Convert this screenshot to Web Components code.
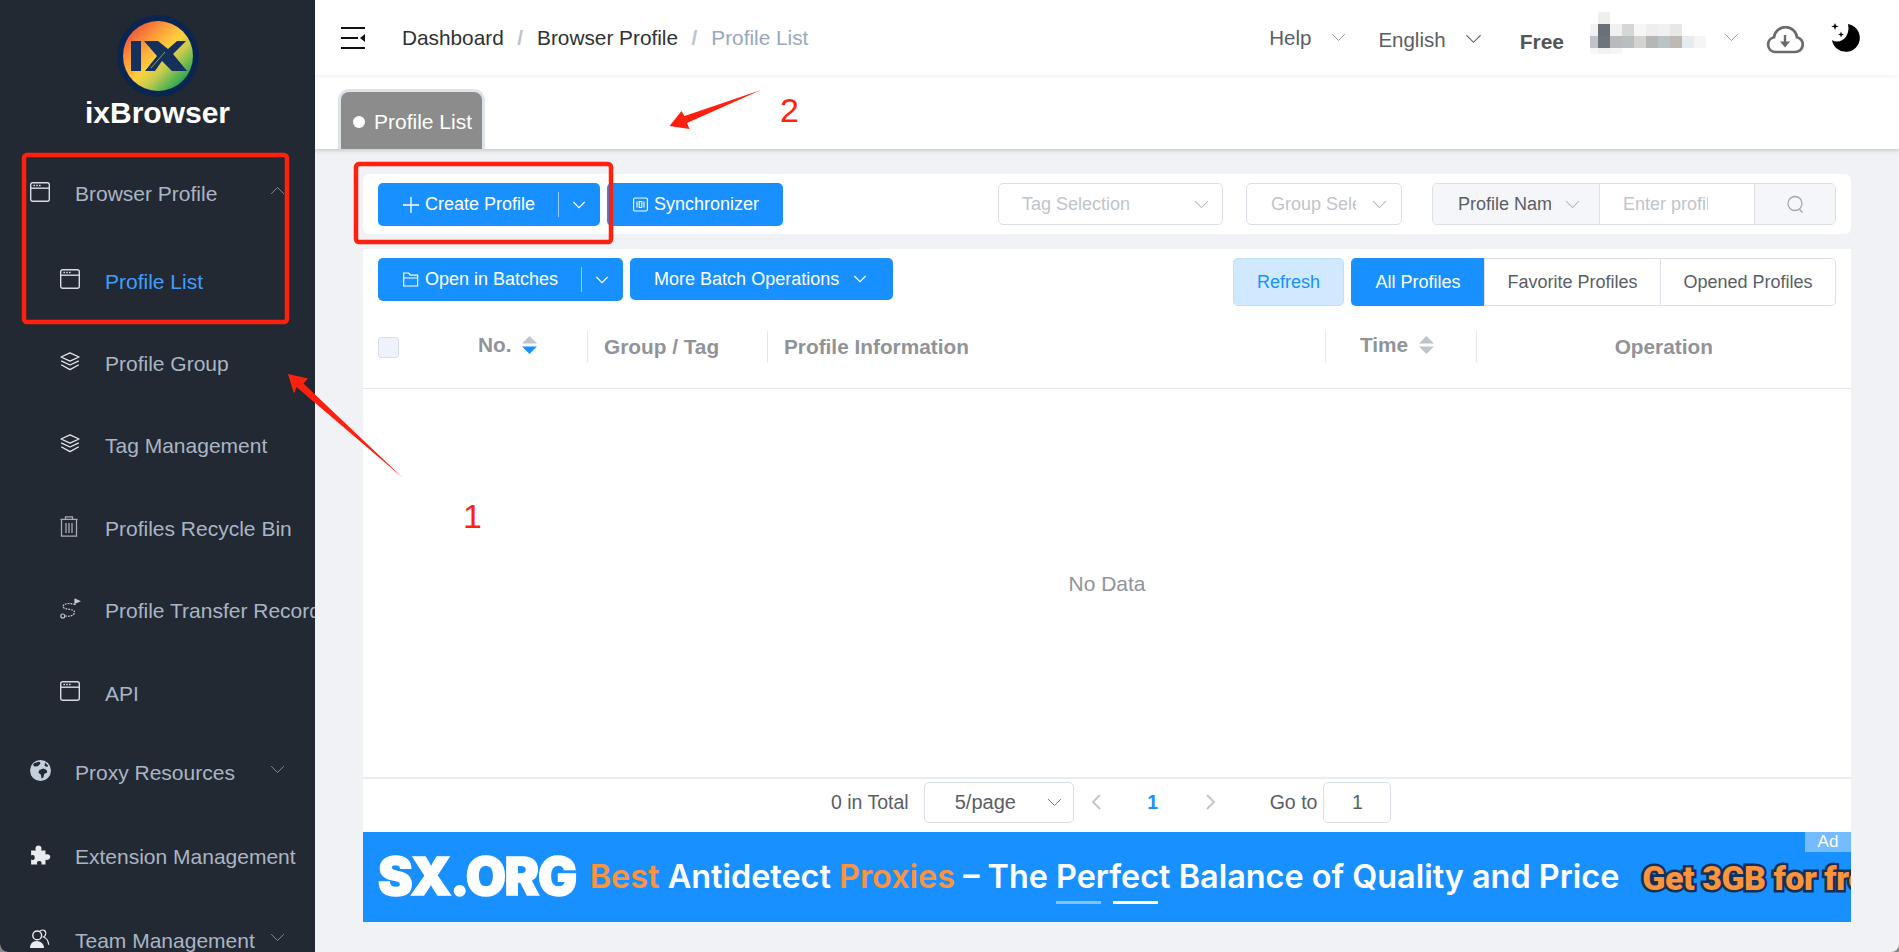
<!DOCTYPE html>
<html>
<head>
<meta charset="utf-8">
<title>Profile List</title>
<style>
  html, body { margin: 0; height: 100%; background: #8a8a8a; overflow: hidden; }
  body { font-family: "Liberation Sans", Arial, sans-serif; }
</style>
</head>
<body>
<app-shell></app-shell>

<script>
const CHEVRON = (size, color, width) => `<svg width="${size}" height="${Math.round(size * 0.6)}" viewBox="0 0 20 12" fill="none" stroke="${color}" stroke-width="${width || 1.4}"><path d="M1.5 1.5 10 10l8.5-8.5"/></svg>`;

const ICONS = {
  window: `<svg width="20" height="20" viewBox="0 0 20 20" fill="none" stroke="#d8dce2" stroke-width="1.4"><rect x=".7" y=".7" width="18.6" height="18.6" rx="2"/><path d="M1 6.2h18"/><path d="M3.4 3.5h1.6M6.2 3.5h1.6M9 3.5h1.6" stroke-width="1.3"/></svg>`,
  layers: `<svg width="20" height="19" viewBox="0 0 20 19" fill="none" stroke="#e6e9ec" stroke-width="1.3" stroke-linejoin="round"><path d="M10 .8 19 5 10 9.200 1 5z"/><path d="M1.200 8.800 10 13l8.800-4.200"/><path d="M1.200 12.800 10 17.600l8.800-4.800"/></svg>`,
  trash: `<svg width="18" height="21" viewBox="0 0 18 21" fill="none" stroke="#a8acb2" stroke-width="1.3"><path d="M.4 3.400h17.200M5.500 3.200V.8h7v2.400M1.500 3.400v16.800h15V3.400"/><path d="M6 7v10M9 7v10M12 7v10"/></svg>`,
  route: `<svg width="21" height="21" viewBox="0 0 21 21" fill="none" stroke="#c6cad0" stroke-width="1.200" stroke-dasharray="1.800 1"><path d="M15 6.600C10 4.600 3.500 5.400 3 8.600c-.5 3.200 11.500 1.800 11.500 5.600 0 3.600-5.500 4.600-9 3.800"/><circle cx="2.800" cy="18" r="2" stroke-dasharray="none"/><path d="M15 7V.8" stroke-dasharray="none"/><path d="M15 .6 21 3.200 15 5.800z" fill="#c6cad0" stroke="none"/></svg>`,
  globe: `<svg width="21" height="21" viewBox="0 0 21 21"><circle cx="10.5" cy="10.5" r="10.5" fill="#c3cfdd"/><path d="M4 3.2 8.6 1.8c2 .4 2.4 1.6 1 2.6L7.8 6.2 4.6 6.6 3 5.2zM9.4 10l4-1.4 3.2 1.4.6 2.6-3 1.4-.8 3.6-1.8 1-.8-4-2.4-1.8zM15 2.4l3 3-.6 1.6-2.8-1z" fill="#222933"/></svg>`,
  puzzle: `<svg width="21" height="20" viewBox="0 0 21 20"><path d="M.6 5.4h4.8C4.4 3.6 5 .6 8 .6s3.6 3 2.6 4.8H15v4.2c1.8-1 4.8-.4 4.8 2.1S16.800 15.700 15 14.700V19.400H10.800c.8-2 .2-3.400-2-3.400s-2.800 1.400-2 3.400H.6v-4.800c1.800.8 3.600.2 3.600-2.200S2.400 9.600.6 10.400z" fill="#e9ebee" transform="translate(.5 0)"/></svg>`,
  users: `<svg width="20" height="20" viewBox="0 0 20 20"><path d="M0 19c0-4 2.400-7 6.600-7s7.400 3 7.400 7z" fill="#e9ebee"/><circle cx="7.200" cy="6.400" r="4.400" fill="none" stroke="#e9ebee" stroke-width="1.400"/><path d="M10 2c3-2.200 6-.4 5.800 2.600-.1 1.600-1 2.800-2.300 3.400 2.800 1 4.800 3.800 5.200 7.800" fill="none" stroke="#e9ebee" stroke-width="1.200"/></svg>`,
  plus: `<svg width="16" height="16" viewBox="0 0 16 16" stroke="#fff" stroke-width="1.3"><path d="M8 0v16M0 8h16"/></svg>`,
  sync: `<svg width="15" height="15" viewBox="0 0 15 15" fill="none" stroke="#fff" stroke-width="1.1"><rect x=".6" y="1" width="13.800" height="13" rx="1.500"/><path d="M4 4.500v6M11 4.500v6M6.200 4.500v6h2.600v-6z"/></svg>`,
  folder: `<svg width="16" height="15" viewBox="0 0 16 15" fill="none" stroke="#fff" stroke-width="1.200"><path d="M.7 14V1h5l1.500 2.200h7.400V14zM.7 6h14.600"/></svg>`
};

class SideItem extends HTMLElement {
  constructor() {
    super();
    this.attachShadow({ mode: 'open' });
  }
  connectedCallback() {
    let arrow = this.getAttribute("arrow");
    let sub = this.hasAttribute("sub");
    let chevron = "";
    if (arrow == "up") chevron = `<span class="arrow up">${CHEVRON(15, "#7f8894", 1.3)}</span>`;
    if (arrow == "down") chevron = `<span class="arrow">${CHEVRON(15, "#7f8894", 1.3)}</span>`;
    this.shadowRoot.innerHTML = `
      <style>
        :host {
          display: flex;
          align-items: center;
          height: ${sub ? "82.4px" : "84px"};
          padding-left: ${sub ? "60px" : "30px"};
          padding-top: 2px;
          box-sizing: border-box;
          font-size: 21px;
          color: ${this.hasAttribute("active") ? "#409eff" : "#aab5c4"};
          white-space: nowrap;
          position: relative;
        }
        .icon {
          width: 45px;
          display: flex;
          flex: none;
          margin-top: -5px;
        }
        .arrow {
          position: absolute;
          left: 270px;
          top: 50%;
          margin-top: -7px;
          display: flex;
        }
        .up { transform: rotate(180deg); }
      </style>
      <span class="icon">${ICONS[this.getAttribute("icon")]}</span>
      <slot></slot>
      ${chevron}
    `;
  }
}
customElements.define("side-item", SideItem);

class AppSidebar extends HTMLElement {
  constructor() {
    super();
    this.attachShadow({ mode: 'open' }).innerHTML = `
      <style>
        :host {
          display: block;
          flex: none;
          width: 315px;
          background: #222933;
          overflow: hidden;
        }
        .brand {
          height: 151px;
          box-sizing: border-box;
          padding-top: 15px;
          display: flex;
          flex-direction: column;
          align-items: center;
          color: #fff;
          font-weight: 700;
          font-size: 30px;
          line-height: 34px;
        }
        .brand svg { display: block; }
        .brand span { margin-top: -1.5px; }
        .subs { margin-top: 4.5px; margin-bottom: -3.5px; }
      </style>
      <div class="brand">
        <svg width="82" height="82" viewBox="0 0 82 82">
          <defs>
            <linearGradient id="lg" x1="0.12" y1="0.08" x2="0.9" y2="0.88">
              <stop offset="0" stop-color="#ee4f3c"/>
              <stop offset="0.3" stop-color="#fd9f3a"/>
              <stop offset="0.52" stop-color="#fdd13d"/>
              <stop offset="0.68" stop-color="#c5cc4e"/>
              <stop offset="1" stop-color="#0fa254"/>
            </linearGradient>
          </defs>
          <circle cx="41" cy="41" r="41" fill="#0a2650"/>
          <circle cx="41" cy="41" r="35" fill="url(#lg)"/>
          <rect x="14" y="26" width="10" height="30" fill="#15305a"/>
          <path d="M27 26H41L51 34 60 26H69L56 39 70 56H55L45 46 38 56H28L40 41z" fill="#15305a"/>
          <path d="M48 37 34 53" stroke="#c9c94a" stroke-width=".7"/>
        </svg>
        <span>ixBrowser</span>
      </div>
      <side-item icon="window" arrow="up">Browser Profile</side-item>
      <div class="subs">
        <side-item sub icon="window" active>Profile List</side-item>
        <side-item sub icon="layers">Profile Group</side-item>
        <side-item sub icon="layers">Tag Management</side-item>
        <side-item sub icon="trash">Profiles Recycle Bin</side-item>
        <side-item sub icon="route">Profile Transfer Record</side-item>
        <side-item sub icon="window">API</side-item>
      </div>
      <side-item icon="globe" arrow="down">Proxy Resources</side-item>
      <side-item icon="puzzle">Extension Management</side-item>
      <side-item icon="users" arrow="down">Team Management</side-item>
    `;
  }
}
customElements.define("app-sidebar", AppSidebar);

class BlurName extends HTMLElement {
  constructor() {
    super();
    let rows = [
      ["", "#eef0ee"],
      ["#f1f1f1", "#6b7078", "#f0f0f0", "#d5d7d6", "#f6f6f6", "#eeeeee", "#eff0ef", "#e7e7e7"],
      ["#c0c3c8", "#6f737b", "#b8babd", "#b9bfc0", "#d3d3d0", "#b6b6b6", "#b9c2c5", "#bdbab6", "#e6ebef", "#f4f5f5"],
      ["#f8f8f8", "#f0f1f0", "#f6f6f6"]
    ];
    let cells = "";
    rows.forEach(row => {
      for (let i = 0; i < 10; i++) {
        cells += `<i style="background:${row[i] || "#fff"}"></i>`;
      }
    });
    this.attachShadow({ mode: 'open' }).innerHTML = `
      <style>
        :host {
          display: grid;
          grid-template-columns: 8px repeat(9, 12px);
          grid-template-rows: 12px 12px 12px 6px;
          flex: none;
          align-self: flex-start;
          margin-top: 12px;
        }
      </style>
      ${cells}
    `;
  }
}
customElements.define("blur-name", BlurName);

class TopBar extends HTMLElement {
  constructor() {
    super();
    this.attachShadow({ mode: 'open' }).innerHTML = `
      <style>
        :host {
          display: flex;
          align-items: center;
          height: 75px;
          background: #fff;
          box-shadow: 0 1px 4px rgba(0, 21, 41, .08);
          font-size: 20.8px;
          color: #303133;
          position: relative;
          z-index: 2;
          padding-left: 26px;
          padding-right: 38px;
          white-space: nowrap;
        }
        .crumbs {
          display: flex;
          align-items: center;
          margin-left: 37px;
        }
        .crumbs b { font-weight: 700; color: #c0c4cc; margin: 0 14px 0 13.5px; }
        .crumbs .last { color: #97a8be; }
        .right {
          margin-left: auto;
          display: flex;
          align-items: center;
          color: #5a5e66;
          height: 100%;
          font-size: 20.5px;
        }
        .help { margin-right: 20px; }
        .lang { margin: 4px 0 0 32px; }
        .free { margin: 8px 26px 0 38px; font-weight: 700; color: #555; font-size: 21px; }
        .c1 { display: flex; }
        .c2 { display: flex; margin: 2px 0 0 19px; }
        .c3 { display: flex; margin: 0 27px 0 18px; }
        .cloud { display: flex; margin-top: 4px; }
        .moon { margin-left: 27px; margin-top: 1px; display: flex; }
      </style>
      <svg width="24" height="22" viewBox="0 0 24 22" fill="#111"><path d="M0 0h24v2H0zM0 10h17v2H0zM0 20h24v2H0zM24 7v8l-5-4z"/></svg>
      <div class="crumbs">
        <span>Dashboard</span><b>/</b><span>Browser Profile</span><b>/</b><span class="last">Profile List</span>
      </div>
      <div class="right">
        <span class="help">Help</span>
        <span class="c1">${CHEVRON(15, "#8d929a", 1.2)}</span>
        <span class="lang">English</span>
        <span class="c2">${CHEVRON(17, "#60646c", 1.3)}</span>
        <span class="free">Free</span>
        <blur-name></blur-name>
        <span class="c3">${CHEVRON(15, "#8d929a", 1.2)}</span>
        <span class="cloud"><svg width="38" height="28" viewBox="0 0 38 28" fill="none" stroke="#6b6b6b" stroke-width="2.700"><path d="M9 26H29A7.500 7.500 0 0 0 31 11.200 11.600 11.600 0 0 0 8 11.200 7.500 7.500 0 0 0 9 26Z"/><path d="M19 9v8" stroke-width="2.400"/><path d="M14 15.500h10L19 21.500z" fill="#6b6b6b" stroke="none"/></svg></span>
        <span class="moon"><svg width="30" height="30" viewBox="0 0 30 30" fill="#000"><path d="M17 1A14 14 0 1 1 1 17C9 22 20 14 17 1Z"/><path d="M4 0 5 2.500 7.800 3.400 5 4.300 4 7 3 4.300.2 3.400 3 2.500zM10 8.500l.8 2.200 2.200.8-2.200.8-.8 2.200-.8-2.200-2.200-.8 2.200-.8z"/></svg></span>
      </div>
    `;
  }
}
customElements.define("top-bar", TopBar);

class TabBar extends HTMLElement {
  constructor() {
    super();
    this.attachShadow({ mode: 'open' }).innerHTML = `
      <style>
        :host {
          display: flex;
          align-items: flex-end;
          height: 74px;
          box-sizing: border-box;
          background: #fff;
          padding-left: 23px;
          box-shadow: 0 2px 4px rgba(0, 0, 0, .16);
          position: relative;
          z-index: 1;
        }
        .tab {
          display: flex;
          align-items: center;
          gap: 9px;
          width: 147px;
          height: 60px;
          box-sizing: border-box;
          padding-left: 12px;
          padding-top: 3px;
          background: #8c8c8c;
          border: 3px solid #dfe3ea;
          border-bottom: 0;
          border-radius: 11px 11px 0 0;
          color: #fff;
          font-size: 21px;
          white-space: nowrap;
        }
        .tab i { width: 12px; height: 12px; border-radius: 50%; background: #fff; flex: none; }
      </style>
      <div class="tab"><i></i>Profile List</div>
    `;
  }
}
customElements.define("tab-bar", TabBar);

class BlueBtn extends HTMLElement {
  constructor() {
    super();
    this.attachShadow({ mode: 'open' });
  }
  connectedCallback() {
    let icon = this.getAttribute("icon");
    let split = this.hasAttribute("split");
    let pad = this.getAttribute("pad") || "24";
    this.shadowRoot.innerHTML = `
      <style>
        :host {
          display: inline-flex;
          align-items: center;
          height: 43px;
          box-sizing: border-box;
          background: #1890ff;
          color: #fff;
          font-size: 18px;
          border-radius: 5px;
          padding-left: ${pad}px;
          white-space: nowrap;
          flex: none;
        }
        .icon { display: flex; margin-right: 6px; }
        .split {
          display: flex;
          align-items: center;
          justify-content: center;
          box-sizing: border-box;
          width: 42px;
          height: 25px;
          margin-left: 23px;
          padding-right: 2px;
          border-left: 1px solid rgba(255, 255, 255, .55);
        }
        .tail { display: flex; margin: 0 26px 0 14px; }
        .end { width: 24px; }
      </style>
      ${icon ? `<span class="icon">${ICONS[icon]}</span>` : ""}
      <slot></slot>
      ${split ? `<span class="split">${CHEVRON(14, "#fff", 1.7)}</span>` : ""}
      ${this.hasAttribute("drop") ? `<span class="tail">${CHEVRON(14, "#fff", 1.7)}</span>` : ""}
      ${!split && !this.hasAttribute("drop") ? `<span class="end"></span>` : ""}
    `;
  }
}
customElements.define("blue-btn", BlueBtn);

class SelectBox extends HTMLElement {
  constructor() {
    super();
    this.attachShadow({ mode: 'open' }).innerHTML = `
      <style>
        :host {
          display: flex;
          align-items: center;
          justify-content: space-between;
          box-sizing: border-box;
          height: 42px;
          background: #fff;
          border: 1px solid #dcdfe6;
          border-radius: 5px;
          font-size: 18px;
          color: #c0c4cc;
          white-space: nowrap;
          flex: none;
        }
        .arrow { display: flex; flex: none; }
      </style>
      <slot></slot>
      <span class="arrow">${CHEVRON(15, "#b6bac2", 1.4)}</span>
    `;
  }
}
customElements.define("select-box", SelectBox);

class FilterBar extends HTMLElement {
  constructor() {
    super();
    this.attachShadow({ mode: 'open' }).innerHTML = `
      <style>
        :host {
          display: flex;
          align-items: flex-start;
          height: 60px;
          box-sizing: border-box;
          padding: 9px 15px;
          background: #fff;
          border-radius: 6px;
          font-size: 18px;
        }
        .btns { display: flex; gap: 7px; }
        .tag { width: 225px; margin-left: auto; padding: 0 13px 0 23px; }
        .grp { width: 156px; margin-left: 23px; padding: 0 14px 0 24px; }
        .clip { display: block; width: 85px; overflow: hidden; }
        .search {
          display: flex;
          width: 404px;
          height: 42px;
          box-sizing: border-box;
          margin-left: 30px;
          border: 1px solid #dcdfe6;
          border-radius: 5px;
          overflow: hidden;
          flex: none;
        }
        .search > div { display: flex; align-items: center; box-sizing: border-box; white-space: nowrap; }
        .kind { width: 167px; padding-left: 25px; background: #f4f6fa; color: #5a5e66; border-right: 1px solid #dcdfe6; }
        .kind span:first-child { width: 93px; overflow: hidden; }
        .kind span:last-child { display: flex; margin-left: 14px; }
        .text { width: 155px; padding-left: 23px; color: #c0c4cc; border-right: 1px solid #dcdfe6; }
        .text span { width: 85px; overflow: hidden; }
        .btn { flex: 1; justify-content: center; background: #f4f6fa; }
      </style>
      <div class="btns">
        <blue-btn icon="plus" split pad="25">Create Profile</blue-btn>
        <blue-btn icon="sync" pad="26">Synchronizer</blue-btn>
      </div>
      <select-box class="tag">Tag Selection</select-box>
      <select-box class="grp"><span class="clip">Group Selection</span></select-box>
      <div class="search">
        <div class="kind"><span>Profile Name</span><span>${CHEVRON(15, "#b6bac2", 1.4)}</span></div>
        <div class="text"><span>Enter profile name</span></div>
        <div class="btn"><svg width="17" height="19" viewBox="0 0 17 19" fill="none" stroke="#a0a5ae" stroke-width="1.300"><circle cx="8" cy="8.500" r="7"/><path d="M12.500 14.500l3 3"/></svg></div>
      </div>
    `;
  }
}
customElements.define("filter-bar", FilterBar);

class ActionBar extends HTMLElement {
  constructor() {
    super();
    this.attachShadow({ mode: 'open' }).innerHTML = `
      <style>
        :host {
          display: flex;
          align-items: flex-start;
          padding: 9px 15px 0;
          background: #fff;
          font-size: 18px;
        }
        .left { display: flex; gap: 7px; }
        .refresh {
          display: flex;
          align-items: center;
          justify-content: center;
          box-sizing: border-box;
          width: 111px;
          height: 48px;
          margin-left: auto;
          background: #d1e9ff;
          border: 1px solid #bcdffd;
          border-radius: 5px;
          color: #1890ff;
        }
        .seg {
          display: flex;
          height: 48px;
          box-sizing: border-box;
          margin-left: 7px;
          border: 1px solid #dcdfe6;
          border-left: 0;
          border-radius: 5px;
          color: #5a5e66;
        }
        .seg span {
          display: flex;
          align-items: center;
          justify-content: center;
          border-left: 1px solid #dcdfe6;
          box-sizing: border-box;
        }
        .seg .on {
          width: 133px;
          margin-top: -1px;
          margin-bottom: -1px;
          background: #1890ff;
          border-color: #1890ff;
          color: #fff;
          border-radius: 5px 0 0 5px;
        }
      </style>
      <div class="left">
        <blue-btn icon="folder" split pad="25">Open in Batches</blue-btn>
        <blue-btn drop pad="24" style="height:42px">More Batch Operations</blue-btn>
      </div>
      <div class="refresh">Refresh</div>
      <div class="seg">
        <span class="on">All Profiles</span>
        <span style="width:176px">Favorite Profiles</span>
        <span style="width:175px">Opened Profiles</span>
      </div>
    `;
  }
}
customElements.define("action-bar", ActionBar);

class SortCaret extends HTMLElement {
  constructor() {
    super();
    this.attachShadow({ mode: 'open' });
  }
  connectedCallback() {
    let down = this.getAttribute("down") || "#c0c4cc";
    this.shadowRoot.innerHTML = `
      <style>:host { display: inline-flex; margin-left: 10px; }</style>
      <svg width="15" height="18" viewBox="0 0 15 18"><path d="M7.500 0 15 7.500H0z" fill="#c0c4cc"/><path d="M0 10.500h15L7.500 18z" fill="${down}"/></svg>
    `;
  }
}
customElements.define("sort-caret", SortCaret);

class DataTable extends HTMLElement {
  constructor() {
    super();
    this.attachShadow({ mode: 'open' }).innerHTML = `
      <style>
        :host {
          display: flex;
          flex-direction: column;
          flex: 1;
          min-height: 0;
          background: #fff;
        }
        .head {
          display: grid;
          grid-template-columns: 224px 180px 558px 150.500px 1fr;
          height: 83px;
          box-sizing: border-box;
          padding-top: 25px;
          border-bottom: 1px solid #e4e7ed;
          color: #909399;
          font-size: 20.8px;
          font-weight: 700;
          white-space: nowrap;
        }
        .head > div {
          display: flex;
          align-items: center;
          height: 32px;
          padding-left: 16px;
          border-left: 1px solid #e4e7ed;
          box-sizing: border-box;
        }
        .head .first { padding-left: 15px; border-left: 0; }
        .head .first label {
          width: 21px;
          height: 21px;
          box-sizing: border-box;
          background: #eef2fb;
          border: 1px solid #d8deea;
          border-radius: 3px;
        }
        .no { margin-left: 79px; margin-top: -5px; display: flex; align-items: center; }
        .time { margin-left: 34px; margin-top: -5px; display: flex; align-items: center; }
        .time sort-caret { margin-left: 11px; }
        .head .op { justify-content: center; padding-left: 0; }
        .body {
          flex: 1;
          display: flex;
          align-items: center;
          justify-content: center;
          padding-top: 2px;
          box-sizing: border-box;
          color: #909399;
          font-size: 21px;
          border-bottom: 2px solid #e8ecf4;
        }
      </style>
      <div class="head">
        <div class="first"><label></label><span class="no">No.<sort-caret down="#1890ff"></sort-caret></span></div>
        <div>Group / Tag</div>
        <div>Profile Information</div>
        <div style="padding-left:0"><span class="time">Time<sort-caret></sort-caret></span></div>
        <div class="op">Operation</div>
      </div>
      <div class="body">No Data</div>
    `;
  }
}
customElements.define("data-table", DataTable);

class PagerBar extends HTMLElement {
  constructor() {
    super();
    this.attachShadow({ mode: 'open' }).innerHTML = `
      <style>
        :host {
          display: flex;
          align-items: center;
          height: 53px;
          box-sizing: border-box;
          padding: 0 0 7px 468px;
          background: #fff;
          font-size: 19.500px;
          color: #5a5e66;
          white-space: nowrap;
        }
        .box {
          display: flex;
          align-items: center;
          box-sizing: border-box;
          height: 41px;
          border: 1px solid #dcdfe6;
          border-radius: 5px;
          flex: none;
        }
        .size { width: 150px; margin-left: 15px; padding-left: 30px; font-size: 20px; }
        .size span { display: flex; margin-left: auto; margin-right: 11px; }
        .go { width: 68px; justify-content: center; margin-left: 6px; }
        .nav { display: flex; }
        .cur { color: #1890ff; font-weight: 700; margin: 0 47px 0 46px; width: 12px; text-align: center; }
      </style>
      <span>0 in Total</span>
      <div class="box size">5/page<span>${CHEVRON(15, "#70747c", 1.3)}</span></div>
      <span class="nav" style="margin-left:17px"><svg width="10" height="16" viewBox="0 0 10 16" fill="none" stroke="#c0c4cc" stroke-width="1.800"><path d="M9 1 2 8l7 7"/></svg></span>
      <span class="cur">1</span>
      <span class="nav"><svg width="10" height="16" viewBox="0 0 10 16" fill="none" stroke="#c0c4cc" stroke-width="1.800"><path d="M1 1l7 7-7 7"/></svg></span>
      <span style="margin-left:54px">Go to</span>
      <div class="box go">1</div>
    `;
  }
}
customElements.define("pager-bar", PagerBar);

class AdBanner extends HTMLElement {
  constructor() {
    super();
    this.attachShadow({ mode: 'open' }).innerHTML = `
      <style>
        :host {
          display: flex;
          align-items: center;
          height: 90px;
          box-sizing: border-box;
          padding-left: 15px;
          background: #1890ff;
          color: #fff;
          white-space: nowrap;
          overflow: hidden;
          position: relative;
          flex: none;
        }
        .logo {
          font-family: Inter, "Liberation Sans", sans-serif;
          font-size: 52px;
          font-weight: 900;
          letter-spacing: -1.4px;
          -webkit-text-stroke: 1.500px #fff;
          margin-top: -1px;
        }
        .line {
          font-family: Inter, "Liberation Sans", sans-serif;
          font-size: 32.4px;
          font-weight: 600;
          margin-left: 14px;
          margin-top: -2px;
        }
        .line em { font-style: normal; color: #fd933a; }
        .free {
          font-family: Roboto, "Liberation Sans", sans-serif;
          font-size: 34px;
          font-weight: 900;
          letter-spacing: -.5px;
          color: #fd933a;
          -webkit-text-stroke: 5px #12305a;
          paint-order: stroke fill;
          margin-left: 23px;
          margin-top: 2px;
        }
        .ad {
          position: absolute;
          right: 0;
          top: 0;
          width: 46px;
          height: 20px;
          background: rgba(255, 255, 255, .4);
          font: 17px/20px "Liberation Sans", sans-serif;
          text-align: center;
        }
        .dots { position: absolute; left: 693px; top: 69px; display: flex; gap: 12px; }
        .dots i { width: 45px; height: 3px; background: #fff; }
        .dots i:first-child { background: rgba(255, 255, 255, .45); }
      </style>
      <span class="logo">SX.ORG</span>
      <span class="line"><em>Best</em> Antidetect <em>Proxies</em> – The Perfect Balance of Quality and Price</span>
      <span class="free">Get 3GB for free</span>
      <span class="ad">Ad</span>
      <span class="dots"><i></i><i></i></span>
    `;
  }
}
customElements.define("ad-banner", AdBanner);

class MarkupLayer extends HTMLElement {
  constructor() {
    super();
    this.attachShadow({ mode: 'open' }).innerHTML = `
      <style>
        :host {
          position: absolute;
          left: 0;
          top: 0;
          width: 1899px;
          height: 952px;
          pointer-events: none;
          z-index: 5;
        }
        svg { position: absolute; left: 0; top: 0; }
        span {
          position: absolute;
          font: 34px/34px "Liberation Sans", sans-serif;
          color: #ff2010;
        }
      </style>
      <svg width="1899" height="952" fill="none" stroke="#ff2010" stroke-width="4.500">
        <rect x="24" y="155" width="263" height="167" rx="3"/>
        <rect x="356" y="164" width="255" height="78" rx="3"/>
        <path stroke="none" fill="#ff2010" d="M288 374 308 378.500 303.500 383.500 403 478 296.500 387 294 393.500z"/>
        <path stroke="none" fill="#ff2010" d="M669.500 126 681.500 111 684.500 116 761 90 687 123 689.500 129z"/>
      </svg>
      <span style="left:463px;top:499px">1</span>
      <span style="left:780px;top:93px">2</span>
    `;
  }
}
customElements.define("markup-layer", MarkupLayer);

class AppShell extends HTMLElement {
  constructor() {
    super();
    this.attachShadow({ mode: 'open' }).innerHTML = `
      <style>
        :host {
          display: flex;
          width: 1899px;
          height: 952px;
          background: #f0f2f5;
          border-radius: 0 0 8px 8px;
          overflow: hidden;
          position: relative;
        }
        .main { flex: 1; min-width: 0; display: flex; flex-direction: column; }
        .content {
          flex: 1;
          min-height: 0;
          display: flex;
          flex-direction: column;
          margin: 25px 48px 30px 48px;
        }
        .table { flex: 1; min-height: 0; display: flex; flex-direction: column; margin-top: 15px; }
      </style>
      <app-sidebar></app-sidebar>
      <div class="main">
        <top-bar></top-bar>
        <tab-bar></tab-bar>
        <div class="content">
          <filter-bar></filter-bar>
          <div class="table">
            <action-bar></action-bar>
            <data-table></data-table>
            <pager-bar></pager-bar>
            <ad-banner></ad-banner>
          </div>
        </div>
      </div>
      <markup-layer></markup-layer>
    `;
  }
}
customElements.define("app-shell", AppShell);
</script>
</body>
</html>
